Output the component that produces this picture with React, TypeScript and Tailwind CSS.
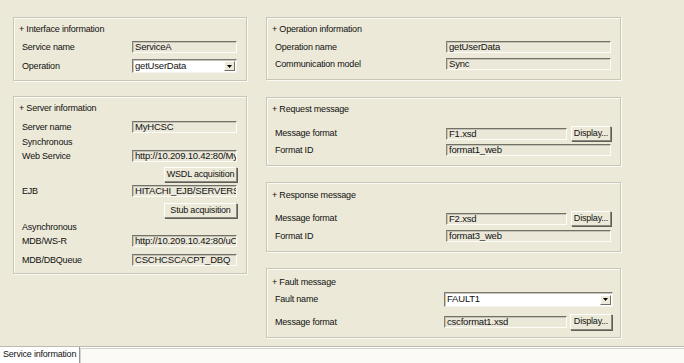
import type { ReactNode } from 'react'

const font = "font-['Liberation_Sans',Arial,sans-serif] text-[9px] tracking-[-0.2px] text-[#111]"

function Group({ title, className, children }: { title: string; className: string; children: ReactNode }) {
  return (
    <div
      className={`border border-[#c8c6b6] shadow-[inset_1px_1px_0_#fbfaf5,1px_1px_0_#fbfaf5] flex flex-col ${className}`}
    >
      <div className="h-[12px] leading-[12px] pl-[5px] whitespace-nowrap">+ {title}</div>
      {children}
    </div>
  )
}

function Row({ label, className, lw, children }: { label: string; className: string; lw: string; children?: ReactNode }) {
  return (
    <div className={`flex items-center pl-[8px] ${className}`}>
      <div className={`${lw} shrink-0 whitespace-nowrap leading-[11px]`}>{label}</div>
      {children}
    </div>
  )
}

function Field({ value, w }: { value: string; w: string }) {
  return (
    <div
      className={`${w} h-[12px] shrink-0 border border-t-[#727168] border-l-[#85847a] border-b-[#fdfcf7] border-r-[#fdfcf7] shadow-[inset_1px_1px_0_#c4c2b4] bg-[#ebe8d9] overflow-hidden whitespace-nowrap leading-[10px] pl-[2px] text-[9.5px]`}
    >
      {value}
    </div>
  )
}

function Btn({ text, className }: { text: string; className: string }) {
  return (
    <div
      className={`shrink-0 flex items-center justify-center border border-t-white border-l-white border-r-[#8c8a80] border-b-[#8c8a80] shadow-[1px_1px_0_#5e5d57] bg-[#ece9d8] whitespace-nowrap ${className}`}
    >
      {text}
    </div>
  )
}

function Select({ value, w, h }: { value: string; w: string; h: string }) {
  return (
    <div
      className={`${w} ${h} shrink-0 flex items-center border border-t-[#7d7c72] border-l-[#7d7c72] border-b-[#f4f3ee] border-r-[#f4f3ee] shadow-[inset_1px_1px_0_#c4c2b4] bg-white pl-[2px] pr-[1px]`}
    >
      <span className="flex-1 whitespace-nowrap text-[9.5px]">{value}</span>
      <div className="w-[11px] h-[10px] flex items-center justify-center border border-t-white border-l-white border-r-[#716f64] border-b-[#716f64] bg-[#ece9d8]">
        <svg width="5" height="3" viewBox="0 0 5 3">
          <path d="M0 0H5L2.5 3Z" fill="#000" />
        </svg>
      </div>
    </div>
  )
}

export default function App() {
  const lw1 = 'w-[110px]'
  const lw2 = 'w-[171px]'
  return (
    <div className={`w-[684px] h-[363px] bg-[#ece9d8] flex flex-col overflow-hidden ${font}`}>
      <div className="h-[346px] flex">
        {/* left column */}
        <div className="ml-[13px] w-[234px] flex flex-col">
          <Group title="Interface information" className="mt-[17px] pt-[5px] pb-[7px]">
            <Row label="Service name" lw={lw1} className="mt-[6px] h-[12px]">
              <Field value="ServiceA" w="w-[105px]" />
            </Row>
            <Row label="Operation" lw={lw1} className="mt-[6px] h-[14px]">
              <Select value="getUserData" w="w-[105px]" h="h-[14px]" />
            </Row>
          </Group>

          <Group title="Server information" className="mt-[15px] pt-[5px] pb-[7px]">
            <Row label="Server name" lw={lw1} className="mt-[7px] h-[12px]">
              <Field value="MyHCSC" w="w-[105px]" />
            </Row>
            <Row label="Synchronous" lw={lw1} className="mt-[4px] h-[11px]" />
            <Row label="Web Service" lw={lw1} className="mt-[2px] h-[12px]">
              <Field value="http://10.209.10.42:80/MyHCSC" w="w-[105px]" />
            </Row>
            <div className="flex justify-end pr-[9px] mt-[5px]">
              <Btn text="WSDL acquisition" className="w-[73px] h-[15px]" />
            </div>
            <Row label="EJB" lw={lw1} className="mt-[3px] h-[12px]">
              <Field value="HITACHI_EJB/SERVERS/MyHCSC" w="w-[105px]" />
            </Row>
            <div className="flex justify-end pr-[9px] mt-[6px]">
              <Btn text="Stub acquisition" className="w-[73px] h-[15px]" />
            </div>
            <Row label="Asynchronous" lw={lw1} className="mt-[4px] h-[11px]" />
            <Row label="MDB/WS-R" lw={lw1} className="mt-[2px] h-[12px]">
              <Field value="http://10.209.10.42:80/uCosminexus" w="w-[105px]" />
            </Row>
            <Row label="MDB/DBQueue" lw={lw1} className="mt-[7px] h-[12px]">
              <Field value="CSCHCSCACPT_DBQ" w="w-[105px]" />
            </Row>
          </Group>
        </div>

        {/* right column */}
        <div className="ml-[19px] w-[355px] flex flex-col">
          <Group title="Operation information" className="mt-[17px] pt-[5px] pb-[9px]">
            <Row label="Operation name" lw={lw2} className="mt-[6px] h-[12px]">
              <Field value="getUserData" w="w-[165px]" />
            </Row>
            <Row label="Communication model" lw={lw2} className="mt-[5px] h-[12px]">
              <Field value="Sync" w="w-[165px]" />
            </Row>
          </Group>

          <Group title="Request message" className="mt-[17px] pt-[5px] pb-[9px]">
            <Row label="Message format" lw={lw2} className="mt-[11px] h-[15px]">
              <Field value="F1.xsd" w="w-[121px]" />
              <Btn text="Display..." className="ml-[4px] w-[40px] h-[15px]" />
            </Row>
            <Row label="Format ID" lw={lw2} className="mt-[3px] h-[12px]">
              <Field value="format1_web" w="w-[165px]" />
            </Row>
          </Group>

          <Group title="Response message" className="mt-[16px] pt-[6px] pb-[9px]">
            <Row label="Message format" lw={lw2} className="mt-[10px] h-[15px]">
              <Field value="F2.xsd" w="w-[121px]" />
              <Btn text="Display..." className="ml-[4px] w-[40px] h-[15px]" />
            </Row>
            <Row label="Format ID" lw={lw2} className="mt-[4px] h-[12px]">
              <Field value="format3_web" w="w-[165px]" />
            </Row>
          </Group>

          <Group title="Fault message" className="mt-[16px] pt-[7px] pb-[7px]">
            <Row label="Fault name" lw="w-[169px]" className="mt-[4px] h-[15px]">
              <Select value="FAULT1" w="w-[169px]" h="h-[15px]" />
            </Row>
            <Row label="Message format" lw="w-[169px]" className="mt-[7px] h-[16px]">
              <Field value="cscformat1.xsd" w="w-[123px]" />
              <Btn text="Display..." className="ml-[3px] w-[42px] h-[16px]" />
            </Row>
          </Group>
        </div>
      </div>

      {/* tab strip */}
      <div className="h-[17px] flex bg-white border-t border-[#bdbbad]">
        <div className="px-[3px] border-r border-[#9a998f] leading-[14px] whitespace-nowrap">
          Service information
        </div>
        <div className="flex-1 mt-[1px] border-t border-l border-[#d6d4c8] bg-[#fbfaf6]" />
      </div>
    </div>
  )
}
